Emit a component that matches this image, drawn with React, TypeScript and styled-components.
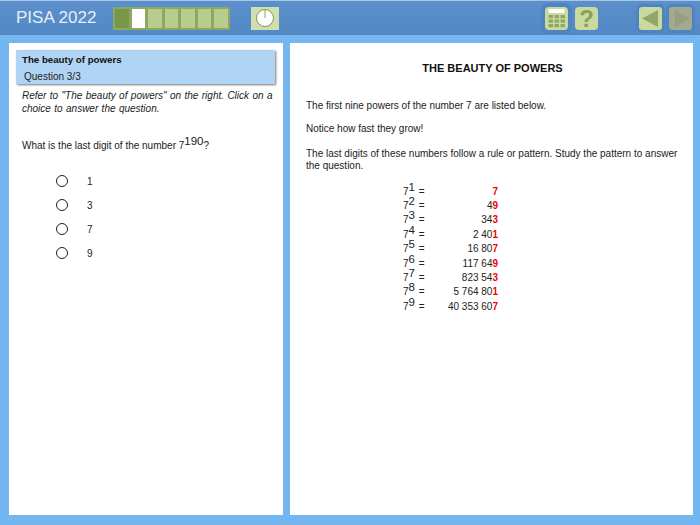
import styled, { createGlobalStyle } from 'styled-components';

const GlobalStyle = createGlobalStyle`
    html, body {
        margin: 0;
        padding: 0;
        background: #74b6ef;
    }
`;

const choices = ['1', '3', '7', '9'];

const powers = [
    { exp: 1, head: '', last: '7' },
    { exp: 2, head: '4', last: '9' },
    { exp: 3, head: '34', last: '3' },
    { exp: 4, head: '2 40', last: '1' },
    { exp: 5, head: '16 80', last: '7' },
    { exp: 6, head: '117 64', last: '9' },
    { exp: 7, head: '823 54', last: '3' },
    { exp: 8, head: '5 764 80', last: '1' },
    { exp: 9, head: '40 353 60', last: '7' },
];

const progress: Array<'done' | 'current' | 'todo'> = ['done', 'current', 'todo', 'todo', 'todo', 'todo', 'todo'];

const App = () => {
    return (
        <>
            <GlobalStyle />
            <Page>
                <Header>
                    <Title>PISA 2022</Title>
                    <Progress>
                        {progress.map((state, i) => (
                            <ProgressCell key={i} state={state} />
                        ))}
                    </Progress>
                    <TimerButton>
                        <svg width="22" height="20" viewBox="0 0 22 20">
                            <circle cx="11" cy="10" r="8.5" fill="#fff" stroke="#7f9a58" strokeWidth="1" />
                            <path d="M11 1.5v8.5" stroke="#8fa868" strokeWidth="1" />
                        </svg>
                    </TimerButton>
                    <ToolGroup>
                        <CalcButton>
                            <svg width="23" height="23" viewBox="0 0 23 23">
                                <rect x="3.5" y="2" width="16" height="4" fill="#fff" />
                                <g fill="#8fa868">
                                    {[8, 12.5, 17].map((y) =>
                                        [3.5, 9.5, 15.5].map((x) => (
                                            <rect key={`${x}-${y}`} x={x} y={y} width="4.5" height="3.2" />
                                        )),
                                    )}
                                </g>
                            </svg>
                        </CalcButton>
                        <HelpButton>?</HelpButton>
                    </ToolGroup>
                    <NavGroup>
                        <NavButton>
                            <svg width="23" height="23" viewBox="0 0 23 23">
                                <path d="M3 11.5 19 3v17z" fill="#8fa868" />
                            </svg>
                        </NavButton>
                        <NavButton $disabled>
                            <svg width="23" height="23" viewBox="0 0 23 23">
                                <path d="M6 3l15 8.5L6 20z" fill="#989f7e" />
                            </svg>
                        </NavButton>
                    </NavGroup>
                </Header>
                <Body>
                    <LeftPanel>
                        <QuestionCard>
                            <QuestionTitle>The beauty of powers</QuestionTitle>
                            <QuestionCount>Question 3/3</QuestionCount>
                        </QuestionCard>
                        <Instructions>
                            Refer to "The beauty of powers" on the right. Click on a choice to answer the question.
                        </Instructions>
                        <Prompt>
                            What is the last digit of the number 7<Sup>190</Sup>?
                        </Prompt>
                        <Choices>
                            {choices.map((choice) => (
                                <Choice key={choice}>
                                    <Radio />
                                    <span>{choice}</span>
                                </Choice>
                            ))}
                        </Choices>
                    </LeftPanel>
                    <RightPanel>
                        <Heading>THE BEAUTY OF POWERS</Heading>
                        <Paragraph>The first nine powers of the number 7 are listed below.</Paragraph>
                        <Paragraph $gap={13}>Notice how fast they grow!</Paragraph>
                        <Paragraph>
                            The last digits of these numbers follow a rule or pattern. Study the pattern to answer the
                            question.
                        </Paragraph>
                        <PowerTable>
                            {powers.map((p) => (
                                <PowerRow key={p.exp}>
                                    <PowerLabel>
                                        7<Sup>{p.exp}</Sup> =
                                    </PowerLabel>
                                    <PowerValue>
                                        {p.head}
                                        <LastDigit>{p.last}</LastDigit>
                                    </PowerValue>
                                </PowerRow>
                            ))}
                        </PowerTable>
                    </RightPanel>
                </Body>
            </Page>
        </>
    );
};

const Page = styled.div`
    width: 700px;
    height: 525px;
    overflow: hidden;
    display: flex;
    flex-direction: column;
    background: #74b6ef;
    font-family: 'Liberation Sans', Arial, sans-serif;
    color: #222;
`;

const Header = styled.header`
    height: 35px;
    box-sizing: border-box;
    display: flex;
    align-items: center;
    border-top: 1px solid #a9c4e4;
    background: linear-gradient(#5b90cc, #5288c4);
`;

const Title = styled.div`
    width: 113px;
    padding-left: 16px;
    box-sizing: border-box;
    font-size: 17px;
    color: #e8eef5;
`;

const Progress = styled.div`
    width: 117px;
    height: 23px;
    box-sizing: border-box;
    display: flex;
    gap: 1px;
    padding: 1px;
    background: #8da862;
`;

const ProgressCell = styled.div<{ state: 'done' | 'current' | 'todo' }>`
    flex: 1;
    border: 1px solid #8da862;
    background: ${({ state }) => (state === 'done' ? '#7a9648' : state === 'current' ? '#ffffff' : '#b8cc8e')};
`;

const TimerButton = styled.div`
    width: 28px;
    height: 23px;
    margin-left: 21px;
    display: flex;
    align-items: center;
    justify-content: center;
    background: #cfdfae;
`;

const ToolGroup = styled.div`
    display: flex;
    align-items: center;
    gap: 7px;
    margin-left: 266px;
`;

const CalcButton = styled.div`
    width: 23px;
    height: 23px;
    border-radius: 4px;
    background: #c8da9f;
    box-shadow: 0 0 0 4px #5084bf;
`;

const HelpButton = styled.div`
    width: 23px;
    height: 23px;
    border-radius: 4px;
    background: #c8da9f;
    color: #86a05e;
    font-size: 24px;
    font-weight: bold;
    line-height: 23px;
    text-align: center;
`;

const NavGroup = styled.div`
    display: flex;
    gap: 7px;
    margin-left: 41px;
`;

const NavButton = styled.div<{ $disabled?: boolean }>`
    width: 23px;
    height: 23px;
    border-radius: 3px;
    display: flex;
    align-items: center;
    justify-content: center;
    background: ${({ $disabled }) => ($disabled ? '#a3a890' : '#c8da9f')};
    box-shadow: 0 0 0 3px #5084bf;
`;

const Body = styled.main`
    flex: 1;
    display: flex;
    gap: 7px;
    padding: 8px 7px 10px 9px;
`;

const LeftPanel = styled.section`
    width: 274px;
    box-sizing: border-box;
    padding: 7px 8px 0 7px;
    background: #fff;
    font-size: 10px;
`;

const QuestionCard = styled.div`
    height: 34px;
    box-sizing: border-box;
    padding: 4px 6px;
    background: #b0d4f3;
    box-shadow: 1px 1px 2px #777;
`;

const QuestionTitle = styled.div`
    font-size: 9.7px;
    font-weight: bold;
    color: #111;
`;

const QuestionCount = styled.div`
    margin: 6px 0 0 2px;
    font-size: 10px;
`;

const Instructions = styled.p`
    margin: 5px 0 0 6px;
    width: 252px;
    font-size: 10px;
    line-height: 13px;
    font-style: italic;
    word-spacing: 0.6px;
`;

const Prompt = styled.p`
    margin: 23px 0 0 6px;
    font-size: 10px;
    line-height: 16px;
`;

const Sup = styled.span`
    font-size: 11.5px;
    line-height: 0;
    vertical-align: 4px;
`;

const Choices = styled.div`
    margin: 19px 0 0 40px;
    display: flex;
    flex-direction: column;
    gap: 7px;
`;

const Choice = styled.div`
    height: 17px;
    display: flex;
    align-items: center;
    gap: 19px;
    font-size: 10px;
`;

const Radio = styled.span`
    width: 12px;
    height: 12px;
    margin-bottom: 2px;
    box-sizing: border-box;
    border: 1.5px solid #222;
    border-radius: 50%;
`;

const RightPanel = styled.section`
    width: 403px;
    box-sizing: border-box;
    padding: 19px 14px 0 16px;
    background: #fff;
    font-size: 10px;
`;

const Heading = styled.h1`
    margin: 0 0 25px;
    font-size: 11px;
    line-height: 13px;
    font-weight: bold;
    text-align: center;
    color: #111;
`;

const Paragraph = styled.p<{ $gap?: number }>`
    margin: 0 0 ${({ $gap }) => $gap ?? 11}px;
    line-height: 12px;
`;

const PowerTable = styled.div`
    margin: 12px 0 0 97px;
    width: 95px;
`;

const PowerRow = styled.div`
    height: 14.4px;
    display: flex;
    align-items: center;
    justify-content: space-between;
`;

const PowerLabel = styled.span`
    white-space: nowrap;
    word-spacing: 1px;
`;

const PowerValue = styled.span`
    white-space: nowrap;
`;

const LastDigit = styled.span`
    color: #f80000;
    font-weight: bold;
`;

export default App;
